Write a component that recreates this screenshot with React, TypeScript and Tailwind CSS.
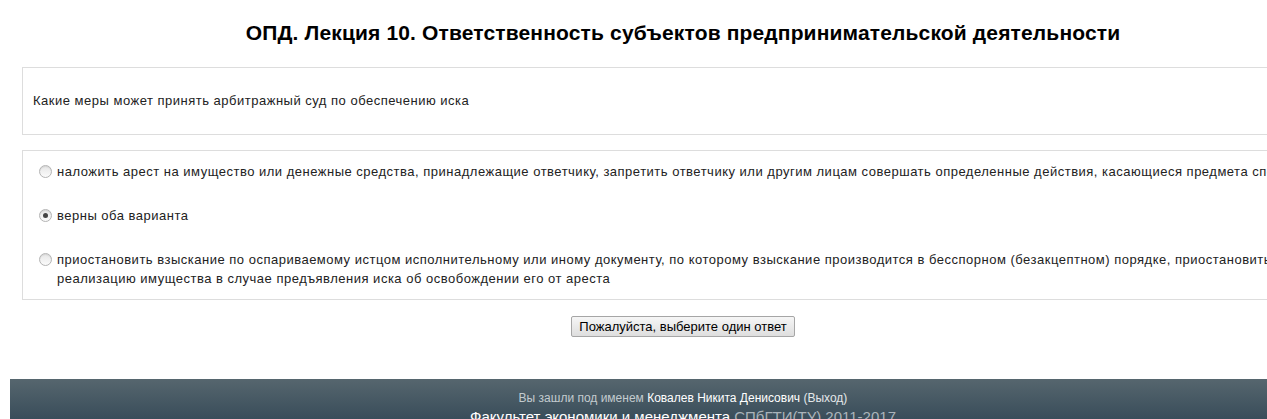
const options = [
  {
    text: 'наложить арест на имущество или денежные средства, принадлежащие ответчику, запретить ответчику или другим лицам совершать определенные действия, касающиеся предмета спора',
    checked: false,
  },
  { text: 'верны оба варианта', checked: true },
  {
    text: 'приостановить взыскание по оспариваемому истцом исполнительному или иному документу, по которому взыскание производится в бесспорном (безакцептном) порядке, приостановить реализацию имущества в случае предъявления иска об освобождении его от ареста',
    checked: false,
  },
];

function Radio({ checked }: { checked: boolean }) {
  return (
    <span className="mt-[3px] flex h-[13px] w-[13px] flex-shrink-0 items-center justify-center rounded-full border border-[#b4b4b4] bg-gradient-to-b from-[#e6e6e6] to-[#fbfbfb] shadow-[inset_0_1px_1px_rgba(0,0,0,0.08)]">
      {checked && <span className="h-[5px] w-[5px] rounded-full bg-[#444]" />}
    </span>
  );
}

export default function App() {
  return (
    <div className="h-[419px] w-[1267px] overflow-hidden bg-white font-['Liberation_Sans',Arial,sans-serif] text-[#222]">
      <div className="w-[1366px]">
        <h2 className="flex h-[67px] items-center justify-center pb-[1px] text-[21px] font-bold tracking-[0.15px] text-black">
          ОПД. Лекция 10. Ответственность субъектов предпринимательской деятельности
        </h2>

        <div className="mx-[22px] flex h-[68px] items-center border border-[#ddd] px-[10px] text-[13px] tracking-[0.5px]">
          Какие меры может принять арбитражный суд по обеспечению иска
        </div>

        <div className="mx-[22px] mt-[15px] flex h-[150px] flex-col gap-[25px] border border-[#ddd] pl-[16px] pr-[10px] pt-[11px] text-[13px] leading-[19px] tracking-[0.5px]">
          {options.map((opt, i) => (
            <label key={i} className="flex items-start gap-[5px]">
              <Radio checked={opt.checked} />
              <span>{opt.text}</span>
            </label>
          ))}
        </div>

        <div className="mt-[16px] flex justify-center">
          <button className="h-[21px] rounded-[2px] border border-[#a6a6a6] bg-gradient-to-b from-[#f6f6f6] to-[#dedede] px-[7px] text-[13px] leading-[17px] text-black">
            Пожалуйста, выберите один ответ
          </button>
        </div>

        <footer className="mx-[10px] mt-[42px] flex h-[60px] flex-col items-center bg-gradient-to-b from-[#56666e] to-[#2b4150] pt-[10px]">
          <div className="text-[12px] leading-[18px] text-[#c3cbcf]">
            Вы зашли под именем{' '}
            <span className="text-white">Ковалев Никита Денисович</span>{' '}
            <span className="text-[#e4e8ea]">(Выход)</span>
          </div>
          <div className="text-[15px] leading-[20px] text-white">
            Факультет экономики и менеджмента{' '}
            <span className="text-[#aab4ba]">СПбГТИ(ТУ) 2011-2017</span>
          </div>
        </footer>
      </div>
    </div>
  );
}
